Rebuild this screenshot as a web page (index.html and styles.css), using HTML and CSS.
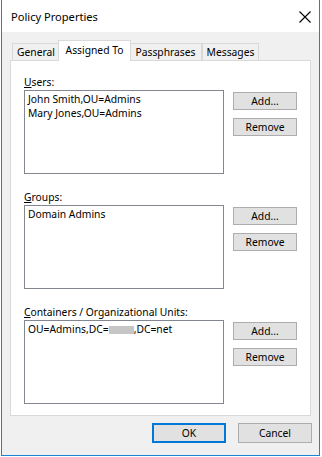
FILE: index.html
```html
<!DOCTYPE html>
<html>
<head>
<meta charset="utf-8">
<link rel="stylesheet" href="styles.css">
</head>
<body>
<div class="window">
  <div class="titlebar">
    <span class="title">Policy Properties</span>
    <svg class="close" width="12" height="12" viewBox="0 0 12 12"><path d="M0.5 0.5 L11.5 11.5 M11.5 0.5 L0.5 11.5" stroke="#000" stroke-width="1.1" fill="none"/></svg>
  </div>
  <div class="content">
    <div class="tabs">
      <div class="tab t-general">General</div>
      <div class="tab active t-assigned">Assigned To</div>
      <div class="tab t-pass">Passphrases</div>
      <div class="tab t-msg">Messages</div>
    </div>
    <div class="panel">
      <div class="section">
        <div class="label"><u>U</u>sers:</div>
        <div class="row">
          <div class="listbox">
            <div class="item">John Smith,OU=Admins</div>
            <div class="item">Mary Jones,OU=Admins</div>
          </div>
          <div class="btns">
            <div class="btn">Add...</div>
            <div class="btn">Remove</div>
          </div>
        </div>
      </div>
      <div class="section">
        <div class="label"><u>G</u>roups:</div>
        <div class="row">
          <div class="listbox">
            <div class="item">Domain Admins</div>
          </div>
          <div class="btns">
            <div class="btn">Add...</div>
            <div class="btn">Remove</div>
          </div>
        </div>
      </div>
      <div class="section">
        <div class="label"><u>C</u>ontainers / Organizational Units:</div>
        <div class="row">
          <div class="listbox">
            <div class="item">OU=Admins,DC=<span class="redact"></span>,DC=net</div>
          </div>
          <div class="btns">
            <div class="btn">Add...</div>
            <div class="btn">Remove</div>
          </div>
        </div>
      </div>
    </div>
    <div class="footer">
      <div class="btn big default">OK</div>
      <div class="btn big">Cancel</div>
    </div>
  </div>
</div>
</body>
</html>
```

FILE: styles.css
```css
html, body {
  margin: 0;
  padding: 0;
  background: #ffffff;
}
body {
  font-family: "Noto Sans", "DejaVu Sans", sans-serif;
  font-size: 10.3px;
  color: #000;
}
.window {
  box-sizing: border-box;
  margin-left: 1px;
  width: 319px;
  height: 456px;
  border: 1px solid #1883d7;
  border-top: none;
  background: #f0f0f0;
  display: flex;
  flex-direction: column;
}
.titlebar {
  height: 32px;
  background: #fff;
  display: flex;
  align-items: center;
  justify-content: space-between;
  padding: 0 8px 0 9px;
  box-sizing: border-box;
}
.title {
  font-size: 11.1px;
  line-height: 16px;
  margin-top: 2px;
}
.close {
  margin-top: 1px;
}
.content {
  padding: 8px 0 0 8px;
  flex: 1;
  display: flex;
  flex-direction: column;
}
.tabs {
  display: flex;
  align-items: flex-end;
  height: 20px;
  padding-left: 2px;
  position: relative;
  z-index: 2;
}
.tab {
  box-sizing: border-box;
  height: 17px;
  border: 1px solid #d9d9d9;
  border-bottom: none;
  background: #f0f0f0;
  line-height: 17px;
  text-align: center;
}
.t-general { width: 47px; border-right: none; }
.t-assigned {
  width: 73px;
  height: 21px;
  margin-bottom: -1px;
  margin-left: -1px;
  margin-right: -1px;
  background: #fff;
  line-height: 18px;
  position: relative;
  z-index: 3;
}
.t-pass { width: 72px; border-left: none; }
.t-msg { width: 57px; border-left: 1px solid #d9d9d9; }
.panel {
  box-sizing: border-box;
  width: 301px;
  height: 356px;
  background: #fff;
  border: 1px solid #d9d9d9;
  padding: 15px 0 0 13px;
  display: flex;
  flex-direction: column;
  gap: 17px;
}
.label {
  line-height: 13px;
  height: 14px;
}
.row {
  display: flex;
  gap: 9px;
}
.listbox {
  box-sizing: border-box;
  width: 200px;
  height: 84px;
  border: 1px solid #828790;
  background: #fff;
  padding: 1px 3px;
}
.item {
  line-height: 14px;
  white-space: nowrap;
}
.redact {
  display: inline-block;
  width: 25px;
  height: 8px;
  background: #c6c6c6;
  vertical-align: -1px;
}
.btns {
  display: flex;
  flex-direction: column;
  gap: 8px;
  padding-top: 2px;
}
.btn {
  box-sizing: border-box;
  width: 64px;
  height: 18px;
  border: 1px solid #adadad;
  background: #e1e1e1;
  text-align: center;
  line-height: 16px;
}
.footer {
  display: flex;
  justify-content: flex-end;
  gap: 12px;
  padding: 7px 7px 0 0;
}
.btn.big {
  width: 74px;
  height: 20px;
  line-height: 18px;
}
.btn.default {
  border: 2px solid #0078d7;
  line-height: 16px;
}
```
